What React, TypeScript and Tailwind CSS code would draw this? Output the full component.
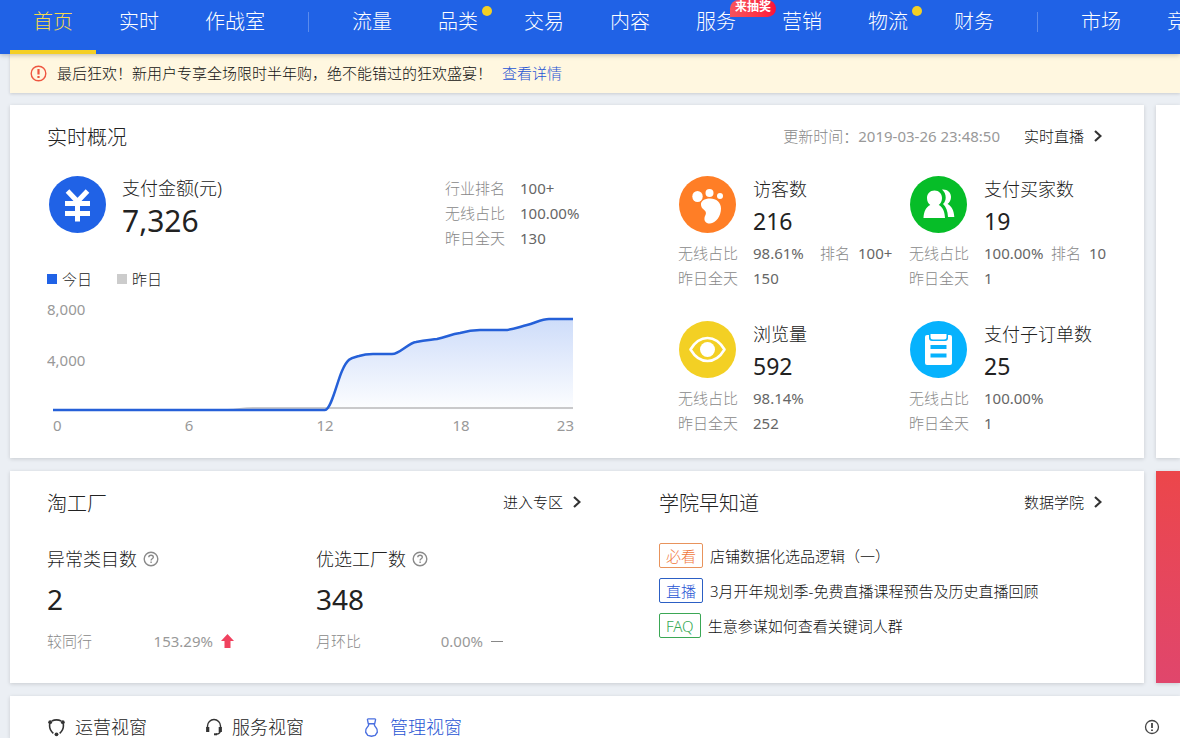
import React from 'react';
import clsx from 'clsx';

const FONT = 'font-["Noto_Sans","Noto_Sans_CJK_SC",sans-serif]';

interface NavItem {
  label: string;
  active?: boolean;
  dot?: boolean;
  badge?: string;
}

const navGroups: NavItem[][] = [
  [{ label: '首页', active: true }, { label: '实时' }, { label: '作战室' }],
  [
    { label: '流量' },
    { label: '品类', dot: true },
    { label: '交易' },
    { label: '内容' },
    { label: '服务', badge: '来抽奖' },
    { label: '营销' },
    { label: '物流', dot: true },
    { label: '财务' },
  ],
  [{ label: '市场' }, { label: '竞争' }],
];

interface Metric {
  name: string;
  value: string;
  wireless: string;
  rank?: string;
  yesterday: string;
  icon: React.ReactNode;
}

function FootIcon() {
  return (
    <svg viewBox="0 0 57 57" className="size-[57px] shrink-0" aria-hidden="true">
      <circle cx="28.5" cy="28.5" r="28.5" fill="#ff7e26" />
      <g fill="#fff">
        <ellipse cx="18.5" cy="20.5" rx="5.2" ry="5.6" />
        <circle cx="30.5" cy="17" r="4" />
        <circle cx="41" cy="20" r="3" />
        <path d="M22 29c-.5-4 3.500-6.500 9-6.500 6.500 0 11 4 11 10 0 7.500-5 14.500-11 15-4 .3-6-2.500-5.500-5.500.3-2.500 2.300-4 1-6.500-1-2-4-2.500-4.500-6.500z" />
      </g>
    </svg>
  );
}

function BuyersIcon() {
  return (
    <svg viewBox="0 0 57 57" className="size-[57px] shrink-0" aria-hidden="true">
      <circle cx="28.5" cy="28.5" r="28.5" fill="#06bd28" />
      <g fill="#fff">
        <path d="M24.500 14.500c4.500 0 7.500 3.300 7.500 7.500 0 3.200-1.400 5.600-3.300 7 4 1.800 6 6.500 6.300 13H13.500c.3-6.500 2.600-11.200 6.800-13-2-1.400-3.300-3.800-3.300-7 0-4.200 3-7.500 7.500-7.500z" />
        <path d="M32 13.500c5.500-.5 9 3 9 7.500 0 3.200-1.400 5.300-3.500 7 4 2 6.500 6.500 6.800 13H38c-.3-6-2-10.500-5-13 1.800-1.700 2.700-3.800 2.700-6.500 0-3.200-1.300-6-3.700-8z" />
      </g>
    </svg>
  );
}

function EyeIcon() {
  return (
    <svg viewBox="0 0 57 57" className="size-[57px] shrink-0" aria-hidden="true">
      <circle cx="28.5" cy="28.5" r="28.5" fill="#f3d024" />
      <path d="M11.500 28.500C16 21 21.500 17 28.500 17s12.500 4 17 11.500C41 36 35.500 40 28.500 40s-12.500-4-17-11.500z" fill="none" stroke="#fff" strokeWidth="2.600" strokeLinejoin="round" />
      <circle cx="28.5" cy="28.5" r="7.500" fill="#fff" />
    </svg>
  );
}

function OrderIcon() {
  return (
    <svg viewBox="0 0 57 57" className="size-[57px] shrink-0" aria-hidden="true">
      <circle cx="28.5" cy="28.5" r="28.5" fill="#06b2fd" />
      <rect x="15" y="14" width="27" height="30" rx="2" fill="#fff" />
      <path d="M19 13v4q0 3 3 3h13q3 0 3-3v-4z" fill="#06b2fd" />
      <path d="M20.500 13h16v3q0 2.500-2.500 2.500H23q-2.500 0-2.500-2.500z" fill="#fff" />
      <path d="M20.500 24h16v4h-16zM20.500 32.500h16v4h-16z" fill="#06b2fd" />
    </svg>
  );
}

function YuanIcon() {
  return (
    <svg viewBox="0 0 57 57" className="mx-[2px] size-[57px] shrink-0" aria-hidden="true">
      <circle cx="28.5" cy="28.5" r="28.5" fill="#2062e6" />
      <path d="M18.500 15 28.500 25.500l10-10.500M28.500 24v21.500M16 27.500h25M16 37.500h25" fill="none" stroke="#fff" strokeWidth="5" />
    </svg>
  );
}

const metrics: Metric[] = [
  { name: '访客数', value: '216', wireless: '98.61%', rank: '100+', yesterday: '150', icon: <FootIcon /> },
  { name: '支付买家数', value: '19', wireless: '100.00%', rank: '10', yesterday: '1', icon: <BuyersIcon /> },
  { name: '浏览量', value: '592', wireless: '98.14%', yesterday: '252', icon: <EyeIcon /> },
  { name: '支付子订单数', value: '25', wireless: '100.00%', yesterday: '1', icon: <OrderIcon /> },
];

const articles = [
  { tag: '必看', title: '店铺数据化选品逻辑（一）', style: 'border-[#e8935c] text-[#f0763a]' },
  { tag: '直播', title: '3月开年规划季-免费直播课程预告及历史直播回顾', style: 'border-[#2c5fc4] text-[#1f55d4]' },
  { tag: 'FAQ', title: '生意参谋如何查看关键词人群', style: 'border-[#3ba755] text-[#35a853]' },
];

function Header() {
  return (
    <header className="relative z-10 h-[54px] overflow-hidden bg-[#2062e6] pl-[10px] shadow-[0_1px_5px_rgba(0,0,0,0.25)]">
      <nav className="flex">
        {navGroups.map((group, i) => (
          <React.Fragment key={i}>
            {i > 0 && <span className="mx-5 mt-3 h-5 w-px shrink-0 bg-[#5a8bed]" />}
            {group.map(item => (
              <a
                key={item.label}
                href="#"
                className={clsx(
                  'relative h-[54px] shrink-0 border-b-4 px-[23px] text-[20px] leading-[44px] whitespace-nowrap',
                  item.active ? 'border-[#f5cf24] text-[#f5d84e]' : 'border-transparent text-white'
                )}
              >
                {item.label}
                {item.dot && <span className="absolute top-[6px] right-[9px] size-[10px] rounded-full bg-[#f3d024]" />}
                {item.badge && (
                  <span className="absolute top-0 right-[-17px] h-[17px] rounded-full rounded-bl-none bg-linear-to-r from-[#f8525c] to-[#fb0d38] px-[5px] text-[12px] leading-[14px] font-bold">
                    {item.badge}
                  </span>
                )}
              </a>
            ))}
          </React.Fragment>
        ))}
      </nav>
    </header>
  );
}

function MoreLink({ children }: { children: React.ReactNode }) {
  return (
    <a href="#" className="flex items-center gap-[10px] text-[#111]">
      {children}
      <svg viewBox="0 0 8 12" className="h-3 w-2" fill="none" stroke="#333" strokeWidth="2.200" aria-hidden="true">
        <path d="M1 1l5.500 5L1 11" />
      </svg>
    </a>
  );
}

function HelpIcon() {
  return (
    <svg viewBox="0 0 16 16" className="size-4" fill="none" stroke="#8a8a8a" strokeWidth="1.400" aria-hidden="true">
      <circle cx="8" cy="8" r="6.800" />
      <path d="M5.800 6.300c0-1.300 1-2.100 2.300-2.100s2.200.8 2.200 2c0 1.500-2.200 1.600-2.200 3.200M8.100 10.500v1.400" />
    </svg>
  );
}

function SalesChart() {
  const line =
    'M6 120H278C284 120 290 92 295 81C301 67 305 68 312 66C318 64 320 64 326 64H345C353 64 361 53 369 52C378 50 382 50 390 49C400 47 404 44 413 43C420 41 426 40 433 40H458C465 40 472 37 480 35C488 33 495 29 502 29H526';
  return (
    <svg viewBox="0 0 534 146" className="block w-full" role="img" aria-label="今日与昨日支付金额走势">
      <defs>
        <linearGradient id="area" x1="0" y1="0" x2="0" y2="1">
          <stop offset="0" stopColor="#2062e6" stopOpacity="0.22" />
          <stop offset="1" stopColor="#2062e6" stopOpacity="0.01" />
        </linearGradient>
      </defs>
      <path d={`${line}V120Z`} fill="url(#area)" />
      <path d="M6 120H180C192 120 194 118 206 118H526" fill="none" stroke="#c9c9cb" strokeWidth="2" />
      <path d={line} fill="none" stroke="#2560d8" strokeWidth="2.500" />
      <g className="fill-[#999] text-[15px] font-normal">
        <text x="0" y="25">8,000</text>
        <text x="0" y="76">4,000</text>
        <text x="6" y="141">0</text>
        <text x="142" y="141" textAnchor="middle">6</text>
        <text x="278" y="141" textAnchor="middle">12</text>
        <text x="414" y="141" textAnchor="middle">18</text>
        <text x="527" y="141" textAnchor="end">23</text>
      </g>
    </svg>
  );
}

function MetricCard({ metric }: { metric: Metric }) {
  return (
    <div className="h-[115px]">
      <div className="flex gap-[17px] pl-px">
        {metric.icon}
        <div className="h-[65px] whitespace-nowrap">
          <div className="text-[18px] leading-[26px]">{metric.name}</div>
          <div className="text-[23px] leading-[38px] font-normal">{metric.value}</div>
        </div>
      </div>
      <dl className="grid grid-cols-[75px_67px_38px_auto] justify-start leading-[25px] whitespace-nowrap text-[#888]">
        <dt>无线占比</dt>
        <dd className="font-normal text-[#666]">{metric.wireless}</dd>
        {metric.rank && (
          <>
            <dt>排名</dt>
            <dd className="font-normal text-[#666]">{metric.rank}</dd>
          </>
        )}
        <dt className="col-start-1">昨日全天</dt>
        <dd className="font-normal text-[#666]">{metric.yesterday}</dd>
      </dl>
    </div>
  );
}

function Overview() {
  return (
    <section className="bg-white px-[37px] pt-3 pb-[22px] shadow-[0_1px_4px_rgba(0,0,0,0.15)]">
      <div className="flex h-[38px] items-center pr-[5px]">
        <h2 className="pt-1 text-[20px]">实时概况</h2>
        <span className="mr-6 ml-auto text-[#888]">
          更新时间：<time className="font-normal text-[#999]">2019-03-26 23:48:50</time>
        </span>
        <MoreLink>实时直播</MoreLink>
      </div>
      <div className="mt-[21px] grid grid-cols-[534fr_429fr] gap-[97px]">
        <div>
          <div className="flex h-[68px]">
            <YuanIcon />
            <div className="ml-[14px] whitespace-nowrap">
              <div className="text-[18px] leading-6">支付金额(元)</div>
              <div className="text-[30px] leading-[42px] font-normal">7,326</div>
            </div>
            <dl className="ml-auto grid w-[136px] grid-cols-[75px_auto] content-start justify-start leading-[25px] whitespace-nowrap text-[#888]">
              <dt>行业排名</dt>
              <dd className="font-normal text-[#666]">100+</dd>
              <dt>无线占比</dt>
              <dd className="font-normal text-[#666]">100.00%</dd>
              <dt>昨日全天</dt>
              <dd className="font-normal text-[#666]">130</dd>
            </dl>
          </div>
          <div className="mt-[25px] mb-px flex gap-[25px] leading-5">
            <span className="flex items-center gap-[5px]">
              <i className="size-[10px] bg-[#2062e6]" />
              今日
            </span>
            <span className="flex items-center gap-[5px]">
              <i className="size-[10px] bg-[#ccc]" />
              昨日
            </span>
          </div>
          <SalesChart />
        </div>
        <div className="grid grid-cols-[231fr_198fr] content-start gap-y-[30px]">
          {metrics.map(m => <MetricCard key={m.name} metric={m} />)}
        </div>
      </div>
    </section>
  );
}

interface FactoryStatProps {
  name: string;
  value: string;
  compare: string;
  rate: string;
  up?: boolean;
}

function FactoryStat({ name, value, compare, rate, up }: FactoryStatProps) {
  return (
    <div>
      <div className="flex items-center gap-[6px] text-[18px] leading-6">
        {name}
        <HelpIcon />
      </div>
      <div className="mt-2 text-[28px] leading-10 font-normal">{value}</div>
      <div className="mt-3 flex w-[187px] items-center justify-between leading-5 text-[#888]">
        {compare}
        <span className="flex items-center gap-2 font-normal text-[#999]">
          {rate}
          {up ? (
            <svg viewBox="0 0 13 14" className="h-[14px] w-[13px]" aria-hidden="true">
              <path d="M6.500 0 13 7H9.500v7h-6V7H0z" fill="#f0425f" />
            </svg>
          ) : (
            <i className="h-px w-3 bg-[#888]" />
          )}
        </span>
      </div>
    </div>
  );
}

function FactoryAndSchool() {
  return (
    <section className="grid grid-cols-[534fr_448fr] gap-[78px] bg-white px-[37px] pt-3 pb-8 shadow-[0_1px_4px_rgba(0,0,0,0.15)]">
      <div>
        <div className="flex h-[38px] items-center justify-between">
          <h2 className="pt-1 text-[20px]">淘工厂</h2>
          <MoreLink>进入专区</MoreLink>
        </div>
        <div className="mt-[26px] grid grid-cols-[269fr_265fr]">
          <FactoryStat name="异常类目数" value="2" compare="较同行" rate="153.29%" up />
          <FactoryStat name="优选工厂数" value="348" compare="月环比" rate="0.00%" />
        </div>
      </div>
      <div>
        <div className="flex h-[38px] items-center justify-between pr-[5px]">
          <h2 className="pt-1 text-[20px]">学院早知道</h2>
          <MoreLink>数据学院</MoreLink>
        </div>
        <ul className="mt-[22px] space-y-[10px] leading-[26px] whitespace-nowrap">
          {articles.map(a => (
            <li key={a.tag} className="flex h-[25px] gap-[7px]">
              <span className={clsx('h-[25px] rounded-[2px] border px-[6px] leading-[24px]', a.style)}>{a.tag}</span>
              <a href="#" className="text-[#111]">{a.title}</a>
            </li>
          ))}
        </ul>
      </div>
    </section>
  );
}

function ViewTabs() {
  return (
    <section className="flex items-start bg-white pt-5 pr-5 pl-[37px] text-[18px] leading-[22px] whitespace-nowrap shadow-[0_1px_4px_rgba(0,0,0,0.15)]">
      <div className="flex gap-[58px]">
        <button className="flex items-center gap-[9px]">
          <svg viewBox="0 0 18 18" className="size-[19px]" fill="none" stroke="#333" strokeWidth="1.500" aria-hidden="true">
            <path d="M4.500 2.800Q9 .8 13.500 2.800M15.300 5q1.200 5.500-3.300 9.500M6 14.500Q1.500 10.500 2.700 5" />
            <g fill="#333" stroke="none">
              <circle cx="3" cy="4" r="1.800" />
              <circle cx="15" cy="4" r="1.800" />
              <circle cx="9" cy="15.500" r="1.800" />
            </g>
          </svg>
          运营视窗
        </button>
        <button className="flex items-center gap-[9px]">
          <svg viewBox="0 0 18 18" className="size-[18px]" fill="none" stroke="#333" strokeWidth="1.400" aria-hidden="true">
            <path d="M2.500 10V8a6.500 6.500 0 0 1 13 0v2M15.500 12q0 4-4.500 4.300" />
            <path d="M2.700 9v5M15.300 9v5" strokeWidth="3.200" />
            <path d="M9 16.300h3" strokeWidth="2" />
          </svg>
          服务视窗
        </button>
        <button className="flex items-center gap-[9px] text-[#1f55d4]">
          <svg viewBox="0 0 18 18" className="size-[19px]" fill="none" stroke="#4a6fe0" strokeWidth="1.300" strokeLinejoin="round" aria-hidden="true">
            <path d="M6 .8h6q1 0 .8 1L12 5.500H6L5.200 1.800Q5 .8 6 .8z" />
            <path d="M6.500 5.500Q6.500 7.500 4.800 9T3.500 13.500L5.500 16.500 9 17.300l3.500-.8 2-3Q14.800 10.500 13.200 9T11.500 5.500" />
          </svg>
          管理视窗
        </button>
      </div>
      <button aria-label="说明" className="ml-auto pt-[3px]">
        <svg viewBox="0 0 16 16" className="size-4" fill="none" stroke="#444" strokeWidth="1.300" aria-hidden="true">
          <circle cx="8" cy="8" r="6.500" />
          <path d="M8 4v5M8 10.500V12" strokeWidth="1.800" />
        </svg>
      </button>
    </section>
  );
}

export default function App() {
  return (
    <div className={clsx('min-h-screen overflow-hidden bg-[#ebeff4] text-[15px] font-light text-[#222]', FONT)}>
      <Header />
      <main className="pl-[10px]">
        <div className="flex h-[39px] items-center bg-[#fff7e0] pl-5 text-[#111] shadow-[0_1px_3px_rgba(0,0,0,0.15)]">
          <svg viewBox="0 0 17 17" className="mr-[10px] size-[17px]" fill="none" stroke="#ee5540" strokeWidth="1.400" aria-hidden="true">
            <circle cx="8.500" cy="8.500" r="7.300" />
            <path d="M8.500 4v5.500M8.500 11v2" strokeWidth="2.200" />
          </svg>
          <span>最后狂欢！新用户专享全场限时半年购，绝不能错过的狂欢盛宴！</span>
          <a href="#" className="ml-[10px] text-[#1f55d4]">查看详情</a>
        </div>
        <div className="mt-3 grid grid-cols-[1fr_24px] gap-x-3 gap-y-[13px]">
          <Overview />
          <aside className="bg-white shadow-[0_1px_4px_rgba(0,0,0,0.15)]" />
          <FactoryAndSchool />
          <aside className="bg-linear-to-b from-[#ec464a] to-[#e0466c] shadow-[0_1px_4px_rgba(0,0,0,0.15)]" />
          <div className="col-span-2">
            <ViewTabs />
          </div>
        </div>
      </main>
    </div>
  );
}
